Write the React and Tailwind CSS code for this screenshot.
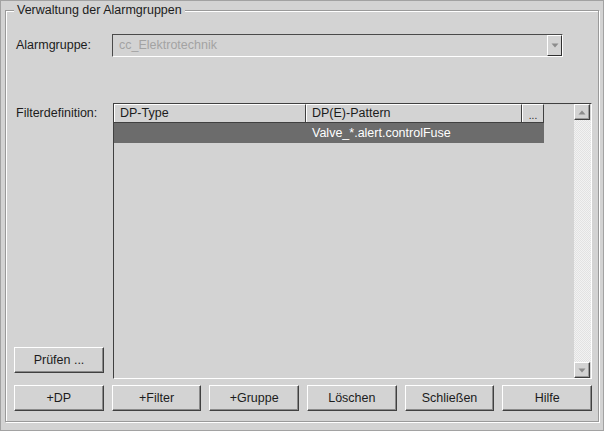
import React from "react";

const font = "font-['Liberation_Sans',Arial,sans-serif]";

function Btn({ children, className = "" }) {
  return (
    <div
      className={`h-[26px] flex items-center justify-center border border-t-white border-l-white border-b-[#404040] border-r-[#404040] shadow-[inset_-1px_-1px_0_#8a8a8a] text-[12.5px] text-[#1c1c1c] ${className}`}
    >
      {children}
    </div>
  );
}

function Tri({ up = false }) {
  return (
    <svg width="8" height="5" viewBox="0 0 8 5" className={up ? "rotate-180" : ""}>
      <polygon points="0.5,0.5 7.5,0.5 4,4.5" fill="#8c8c8c" />
    </svg>
  );
}

function SmallBtn({ up }) {
  return (
    <div className="w-[16px] h-[16px] flex items-center justify-center bg-[#d3d3d3] border border-t-white border-l-white border-b-[#404040] border-r-[#404040] shadow-[inset_-1px_-1px_0_#9a9a9a]">
      <Tri up={up} />
    </div>
  );
}

export default function App() {
  return (
    <div
      className={`${font} w-[604px] h-[431px] bg-[#d3d3d3] border border-[#a2a2a2] pt-[9px] pl-[4px] pr-[4px] pb-[8px] text-[12.5px] text-[#1c1c1c]`}
    >
      <div className="relative h-full border border-[#9a9a9a] shadow-[inset_1px_1px_0_#fff,1px_1px_0_#fff] flex flex-col pt-[23px] pl-[8px] pr-[6px] pb-[10px]">
        <div className="absolute left-[8px] top-[-9px] px-[3px] bg-[#d3d3d3] leading-[17px]">
          Verwaltung der Alarmgruppen
        </div>

        {/* Alarmgruppe row */}
        <div className="flex h-[23px]">
          <div className="w-[98px] pl-[2px] flex items-center">Alarmgruppe:</div>
          <div className="w-[451px] h-full flex border border-t-[#4a4a4a] border-l-[#4a4a4a] border-b-white border-r-white">
            <div className="flex-1 flex items-center pl-[6px] text-[#a3a3a3]">cc_Elektrotechnik</div>
            <div className="w-[15px] h-full flex items-center justify-center border border-t-white border-l-white border-b-[#303030] border-r-[#303030]">
              <Tri />
            </div>
          </div>
        </div>

        {/* Filter row */}
        <div className="flex h-[276px] mt-[46px]">
          <div className="w-[99px] flex flex-col justify-between pb-[6px]">
            <div className="pl-[2px] pt-[2px] leading-[17px]">Filterdefinition:</div>
            <Btn className="w-[90px]">Prüfen ...</Btn>
          </div>
          <div className="flex-1 flex border border-t-[#404040] border-l-[#404040] border-b-white border-r-white">
            <div className="flex-1 flex flex-col">
              <div className="flex h-[19px] w-[430px] border-b border-[#404040]">
                <div className="w-[192px] pl-[5px] flex items-center border-r border-[#404040] border-t border-t-white border-l border-l-white">
                  DP-Type
                </div>
                <div className="w-[216px] pl-[5px] flex items-center border-r border-[#404040] border-t border-t-white border-l border-l-white">
                  DP(E)-Pattern
                </div>
                <div className="w-[22px] flex items-center justify-center border-r border-[#404040] border-t border-t-white border-l border-l-white text-[10px] pt-[4px]">
                  ...
                </div>
              </div>
              <div className="flex h-[20px] w-[430px] bg-[#6c6c6c] text-white">
                <div className="w-[192px]"></div>
                <div className="w-[238px] pl-[6px] flex items-center">Valve_*.alert.controlFuse</div>
              </div>
            </div>
            <div className="w-[17px] flex flex-col">
              <SmallBtn up />
              <div className="flex-1 bg-[repeating-conic-gradient(#f2f2f2_0_25%,#e2e2e2_0_50%)] bg-[length:2px_2px]"></div>
              <SmallBtn />
            </div>
          </div>
        </div>

        {/* Buttons */}
        <div className="flex gap-[8px] mt-[6px]">
          <Btn className="flex-1">+DP</Btn>
          <Btn className="flex-1">+Filter</Btn>
          <Btn className="flex-1">+Gruppe</Btn>
          <Btn className="flex-1">Löschen</Btn>
          <Btn className="flex-1">Schließen</Btn>
          <Btn className="flex-1">Hilfe</Btn>
        </div>
      </div>
    </div>
  );
}
